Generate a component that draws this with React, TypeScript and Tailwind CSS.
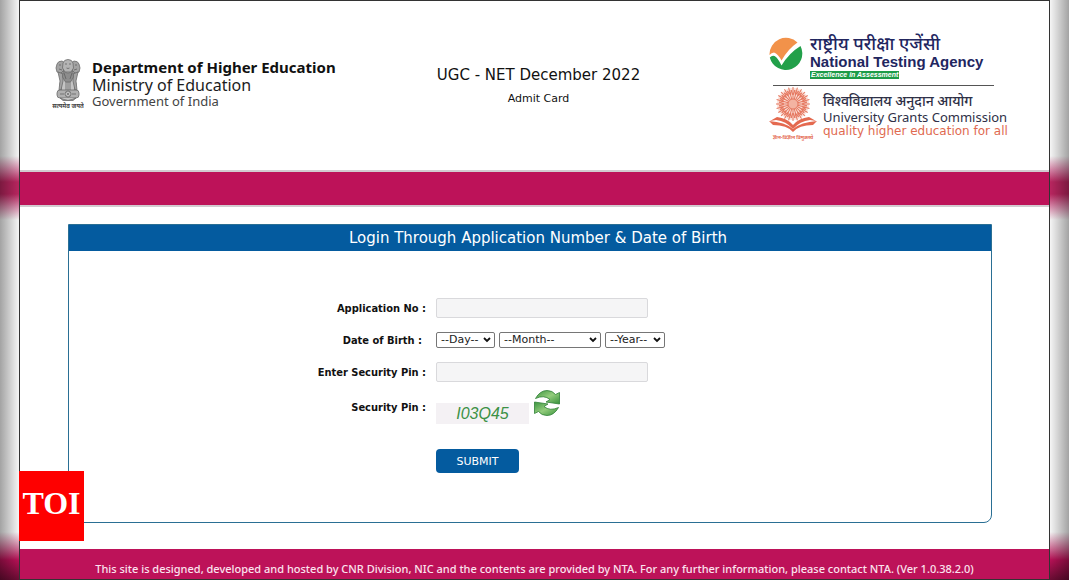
import React from "react";

const sans = "font-['DejaVu_Sans',Verdana,sans-serif]";

function StateEmblem() {
  return (
    <svg viewBox="0 0 32 52" className="h-[52px] w-8 shrink-0" role="img" aria-label="State Emblem of India">
      <g fill="#a3a3a3" stroke="#6b6b6b" strokeWidth="0.8">
        <path d="M9 12h14l-1 6 2 8-2 7H10l-2-7 2-8z" fill="#c4c4c4" />
        <path d="M5 6q1-3 5-3l3 2-1 7-3 3-4-1-1-4z" />
        <path d="M27 6q-1-3-5-3l-3 2 1 7 3 3 4-1 1-4z" />
        <path d="M11 5q1-3.500 5-3.500T21 5l.5 5-2.500 4h-6l-2.500-4z" fill="#b4b4b4" />
        <path d="M6 14l5 2 0 7-2 9H7l1-9z" />
        <path d="M26 14l-5 2 0 7 2 9h2l-1-9z" />
        <path d="M11 13q5 4 10 0l.5 6-3 5h-5l-3-5z" fill="#8d8d8d" />
        <rect x="5" y="32" width="22" height="8" rx="3" fill="#b0b0b0" />
        <path d="M8 40q8 4 16 0l-3 2.500H11z" />
      </g>
      <g stroke="#5a5a5a" strokeWidth="0.7" fill="none">
        <path d="M13 6h2M17 6h2M14.500 10q1.500 1 3 0M7 7h2M23 7h2M7 11l3 1M25 11l-3 1M14 24v8M16 24v8M18 24v8M12 15l2 6M20 15l-2 6M8 36h4M20 36h4" />
        <circle cx="16" cy="36" r="3" fill="#e4e4e4" />
        <path d="M16 33v6M13 36h6M14 34l4 4M18 34l-4 4" strokeWidth="0.5" />
      </g>
      <text x="16" y="50" textAnchor="middle" fontSize="6" fontWeight="700" fill="#444" fontFamily="Noto Sans, sans-serif">
        सत्यमेव जयते
      </text>
    </svg>
  );
}

function NtaLogo() {
  return (
    <svg viewBox="0 0 34 34" className="size-[34px] shrink-0" role="img" aria-label="National Testing Agency">
      <path d="M0.500 18A16.500 16.500 0 0 1 28.500 5.500Q19 12 12.500 23.500Q9 17 5 15.500Q2.500 15.500 0.500 18Z" fill="#f2924a" />
      <path d="M0.800 20.500Q3 18 5.500 19Q9 21 12.500 28.500Q20 16 31.500 9A16.500 16.500 0 1 1 0.800 20.500Z" fill="#22a04a" />
    </svg>
  );
}

const rays = Array.from({ length: 24 }, (_, i) => i * 15);

function UgcLogo() {
  return (
    <svg viewBox="0 0 48 56" className="h-14 w-12 shrink-0" role="img" aria-label="University Grants Commission">
      <circle cx="24" cy="18" r="16" fill="#fbe0d8" />
      <g stroke="#e57860" fill="none">
        {rays.map((angle) => (
          <path key={angle} d="M24 13V1M24 9l-2-5M24 9l2-5" strokeWidth="1" transform={`rotate(${angle} 24 18)`} />
        ))}
        <circle cx="24" cy="18" r="5" fill="#f3b3a2" />
      </g>
      <path d="M1 35l7-4q10 1 16 8 6-7 16-8l7 4-6-1q-10 1-17 9-7-8-17-9z" fill="#e4694f" />
      <path d="M0 35q16 1 24 8 8-7 24-8l-4 4q-14 0-20 7-6-7-20-7z" fill="#e4694f" />
      <text x="24" y="53" textAnchor="middle" fontSize="5" fontWeight="700" fill="#e4694f" fontFamily="Noto Sans, sans-serif">
        ज्ञान-विज्ञान विमुक्तये
      </text>
    </svg>
  );
}

function RefreshIcon() {
  return (
    <svg viewBox="0 0 28 28" className="size-7" aria-hidden="true">
      <defs>
        <linearGradient id="leaf" x1="0" y1="0" x2="1" y2="1">
          <stop offset="0" stopColor="#3b9440" />
          <stop offset="0.5" stopColor="#93cc7c" />
          <stop offset="1" stopColor="#36913a" />
        </linearGradient>
      </defs>
      <g fill="url(#leaf)" stroke="#2f8036" strokeWidth="0.8" strokeLinejoin="round">
        <path d="M2.500 9.500Q7 1.500 14 1.500Q19.500 1.500 22.500 5.500L26.500 3.500V15L13 13L17 10.500Q11 5.500 2.500 9.500Z" />
        <path d="M25.500 18.500Q21 26.500 14 26.500Q8.500 26.500 5.500 22.500L1.500 24.500V13L15 15L11 17.500Q17 22.500 25.500 18.500Z" />
      </g>
    </svg>
  );
}

function DateSelect({ label, placeholder, options, width }: { label: string; placeholder: string; options: string[]; width: string }) {
  return (
    <span className={`relative flex ${width}`}>
      <select
        aria-label={label}
        className="h-4 w-full appearance-none rounded-xs border border-[#767676] bg-white pl-1 text-[11px] leading-3 text-[#222]"
      >
        <option>{placeholder}</option>
        {options.map((o) => (
          <option key={o}>{o}</option>
        ))}
      </select>
      <svg viewBox="0 0 8 6" className="pointer-events-none absolute top-[5px] right-1 h-1.5 w-2" aria-hidden="true">
        <path d="M1 1l3 3 3-3" fill="none" stroke="#111" strokeWidth="1.800" />
      </svg>
    </span>
  );
}

const days = Array.from({ length: 31 }, (_, i) => String(i + 1));
const months = ["January", "February", "March", "April", "May", "June", "July", "August", "September", "October", "November", "December"];
const years = Array.from({ length: 60 }, (_, i) => String(2004 - i));

const labelClass = "pt-px text-right font-['DejaVu_Sans_Condensed','DejaVu_Sans',sans-serif] text-[11px] leading-4 font-bold text-[#111]";
const inputClass = "h-5 w-[212px] rounded-xs border border-[#d9d9dc] bg-[#f5f5f6] px-2 text-[11px]";

export default function App() {
  return (
    <div className={`flex min-h-screen bg-white ${sans}`}>
      <div className="w-[19px] shrink-0 bg-[linear-gradient(to_right,rgba(0,0,0,0.36),rgba(0,0,0,0.04)),linear-gradient(to_bottom,#fff_0px,#fff_156px,#e08aae_170px,#c02763_182px,#c02763_194px,#e08aae_206px,#fff_220px,#fff_calc(100%_-_48px),#bd1259_calc(100%_-_20px),#6d0d35_100%)]" />
      <div className="relative flex min-w-0 grow flex-col border border-[#333]">
        <header className="flex h-[169px] items-start pl-8 pr-10">
          <div className="mt-[57px] flex w-[300px] gap-2">
            <StateEmblem />
            <div className="whitespace-nowrap font-['Noto_Sans',sans-serif] text-[#1c1c1c]">
              <p className="text-[15px] leading-[19px] font-bold text-[#111]">Department of Higher Education</p>
              <p className="text-[16px] leading-4">Ministry of Education</p>
              <p className="text-[13px] leading-4 text-[#444]">Government of India</p>
            </div>
          </div>
          <div className="mt-16 grow pr-11 text-center text-[#111]">
            <h1 className="text-[15px] leading-5">UGC - NET December 2022</h1>
            <p className="mt-1 text-[11px] leading-5">Admit Card</p>
          </div>
          <div className="mt-8 w-[240px] whitespace-nowrap font-['Noto_Sans',sans-serif]">
            <div className="flex gap-[7px]">
              <div className="pt-1">
                <NtaLogo />
              </div>
              <div className="text-[#22265f]">
                <p className="pt-px text-[18px] leading-[18px] font-medium">राष्ट्रीय परीक्षा एजेंसी</p>
                <p className="font-['Liberation_Sans',sans-serif] text-[15px] leading-[19px] font-bold">National Testing Agency</p>
                <p className="w-fit bg-[#1d9b48] px-px font-['Liberation_Sans',sans-serif] text-[7px] leading-2 font-bold text-white italic">Excellence in Assessment</p>
              </div>
            </div>
            <hr className="mt-1.5 ml-1 w-[221px] border-[#555]" />
            <div className="flex gap-1.5">
              <UgcLogo />
              <div className="pt-[7px] text-[#2e3047]">
                <p className="text-[14px] leading-4 font-medium">विश्वविद्यालय अनुदान आयोग</p>
                <p className="text-[13px] leading-4">University Grants Commission</p>
                <p className="font-['DejaVu_Sans',sans-serif] text-[12px] leading-3 text-[#e06a50]">quality higher education for all</p>
              </div>
            </div>
          </div>
        </header>
        <div className="h-[37px] border-y-2 border-[#d2cbd0] bg-[#bd1259]" />
        <main className="grow pt-[17px] pr-[57px] pb-[26px] pl-12">
          <form
            className="h-[299px] rounded-b-lg border border-[#2a6f94] bg-white"
            onSubmit={(e) => e.preventDefault()}
          >
            <h2 className="bg-[#045b9f] pl-4 text-center text-[15px] leading-[26px] text-white">Login Through Application Number &amp; Date of Birth</h2>
            <div className="mt-[47px] grid grid-cols-[357fr_555fr] items-center gap-x-2.5 gap-y-3">
              <label htmlFor="app-no" className={labelClass}>Application No :</label>
              <input id="app-no" type="text" className={inputClass} />
              <span className={`${labelClass} pr-1`}>Date of Birth :</span>
              <div className="flex h-5 items-center gap-1">
                <DateSelect label="Day" placeholder="--Day--" options={days} width="w-[59px]" />
                <DateSelect label="Month" placeholder="--Month--" options={months} width="w-[102px]" />
                <DateSelect label="Year" placeholder="--Year--" options={years} width="w-[60px]" />
              </div>
              <label htmlFor="pin" className={labelClass}>Enter Security Pin :</label>
              <input id="pin" type="text" className={inputClass} />
            </div>
            <div className="mt-[7px] grid grid-cols-[357fr_555fr] items-center gap-x-2.5">
              <span className={labelClass}>Security Pin :</span>
              <div className="flex h-9 items-start gap-1">
                <span className="mt-3.5 h-[21px] w-[93px] bg-[#f4f1f4] text-center font-['Liberation_Sans',sans-serif] text-[16px] leading-[21px] text-[#3c9146] italic">I03Q45</span>
                <button type="button" aria-label="Refresh security pin"><RefreshIcon /></button>
              </div>
            </div>
            <div className="mt-6 grid grid-cols-[357fr_555fr] gap-x-2.5">
              <button type="submit" className="col-start-2 h-6 w-[83px] rounded-sm bg-[#045b9f] pt-px text-[11px] leading-5 text-white">SUBMIT</button>
            </div>
          </form>
        </main>
        <footer className="h-[30px] bg-[#bd1259] px-3 pt-3 text-center font-['Noto_Sans',sans-serif] text-[11px] leading-4 font-medium text-[#fbe3ee]">
          This site is designed, developed and hosted by CNR Division, NIC and the contents are provided by NTA. For any further information, please contact NTA. (Ver 1.0.38.2.0)
        </footer>
        <div className="absolute bottom-[38px] -left-px flex h-[70px] w-[65px] items-center justify-center bg-[#fe0000] pb-1.5 font-['Liberation_Serif',serif] text-[32px] leading-8 font-bold text-white">TOI</div>
      </div>
      <div className="w-[19px] shrink-0 bg-[linear-gradient(to_left,rgba(0,0,0,0.36),rgba(0,0,0,0.04)),linear-gradient(to_bottom,#fff_0px,#fff_156px,#e08aae_170px,#c02763_182px,#c02763_194px,#e08aae_206px,#fff_220px,#fff_calc(100%_-_48px),#bd1259_calc(100%_-_20px),#6d0d35_100%)]" />
    </div>
  );
}
